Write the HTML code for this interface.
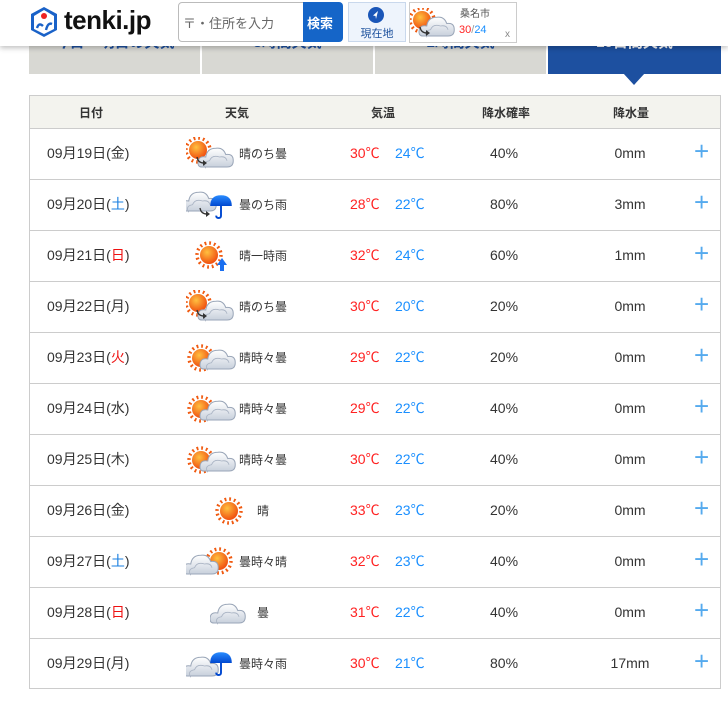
<!DOCTYPE html>
<html><head><meta charset="utf-8"><style>
*{margin:0;padding:0;box-sizing:border-box}
body{width:728px;height:703px;background:#fff;font-family:"Liberation Sans","Noto Sans CJK JP",sans-serif;color:#333;position:relative;overflow:hidden}
.abs{position:absolute}
.tab{position:absolute;top:40px;height:34px;background:#d8d8d3;overflow:hidden;color:#1d50a0;font-size:15px;font-weight:bold;text-align:center}
.tab i{font-style:normal;position:relative;top:-9px}
.hdr{position:absolute;left:0;top:0;width:728px;height:46px;background:#fff;box-shadow:0 2px 5px rgba(0,0,0,.25)}
.tbl{position:absolute;left:29px;top:95px;width:692px;height:594px;border:1px solid #ccc}
.hd{height:33px;background:#f3f3ee;border-bottom:1px solid #ccc;position:relative;font-size:12px;font-weight:bold;color:#333}
.hd span{position:absolute;top:8px;transform:translateX(-50%)}
.row{height:51px;border-bottom:1px solid #ccc;position:relative;font-size:14px}
.row:last-child{border-bottom:none}
.row span{position:absolute;top:14px}
.d{left:17px;color:#333}
.w{font-size:12px;top:16px!important;color:#333}
.hi{left:320px;color:#f22}
.lo{left:365px;color:#1a8fff}
.p{left:460px;color:#333;top:16px!important}
.mm{color:#333;transform:translateX(-50%);left:600px;top:16px!important}
.pl{left:664px;color:#55aaee;font-size:26px;top:7px!important;font-weight:normal}
.r{color:#e11}.b{color:#1a7fe0}
svg.ic{position:absolute;top:8px}
</style></head><body>
<svg width="0" height="0" style="position:absolute"><defs>
<radialGradient id="sg" cx="40%" cy="35%" r="65%"><stop offset="0" stop-color="#ffc040"/><stop offset="1" stop-color="#f05010"/></radialGradient>
<linearGradient id="cg" x1="0" y1="0" x2="0" y2="1"><stop offset="0" stop-color="#fff"/><stop offset="1" stop-color="#c8d0dc"/></linearGradient>
<linearGradient id="ug" x1="0" y1="0" x2="0" y2="1"><stop offset="0" stop-color="#2a8cff"/><stop offset="1" stop-color="#0048d0"/></linearGradient>
<g id="sun"><circle cx="0" cy="0" r="12" fill="none" stroke="#f05a10" stroke-width="3.4" stroke-dasharray="1.8 2.9"/><circle cx="0" cy="0" r="9" fill="url(#sg)"/></g>
<g id="cl"><g transform="scale(1.25)"><path d="M-12 8 Q-16 8 -15 3 Q-14 -1 -9 0 Q-8 -7 -1 -7 Q5 -8 7 -2 Q13 -3 13 3 Q13 8 8 8 Z" fill="url(#cg)" stroke="#9aa6b8" stroke-width="0.8"/><path d="M-9 9 Q-12 4 -6 3 Q-4 -2 2 0 Q7 -1 8 3" fill="none" stroke="#aab4c4" stroke-width="0.7"/></g></g>
<g id="um"><g transform="scale(1.2)"><path d="M-9 0 Q-9 -9 0 -9 Q9 -9 9 0 Z" fill="url(#ug)"/><path d="M0 0 V8 Q0 10 -2 10 Q-4 10 -4 8" fill="none" stroke="#0048d0" stroke-width="1.6"/></g></g>
<g id="ar"><path d="M-4 -3 Q-3 3 3 3" fill="none" stroke="#333" stroke-width="1.3"/><path d="M2 0 L6 3 L2 6 Z" fill="#333"/></g>
<g id="sm"><path d="M0 -6 L5 1 H2 V7 H-2 V1 H-5 Z" fill="#1a6ff0"/></g>
</defs></svg>

<div class="tab" style="left:29px;width:171px"><i>今日・明日の天気</i></div>
<div class="tab" style="left:202px;width:171px"><i>3時間天気</i></div>
<div class="tab" style="left:375px;width:171px"><i>1時間天気</i></div>
<div class="tab" style="left:548px;width:173px;background:#1d50a0;color:#fff"><i>10日間天気</i></div>
<div class="abs" style="left:623px;top:73px;width:0;height:0;border-left:11px solid transparent;border-right:11px solid transparent;border-top:12px solid #1d50a0"></div>

<div class="hdr"></div>
<svg class="abs" style="left:29px;top:6px" width="30" height="32" viewBox="0 0 30 32"><path d="M15 1 L28 8 V24 L15 31 L2 24 V8 Z" fill="#1a62c8"/><path d="M15 4 L25 10 V23 L15 28 L5 23 V10 Z" fill="#fff"/><circle cx="15" cy="10" r="3" fill="#e22"/><path d="M8 22 Q10 16 14 20 M17 24 Q19 16 23 18" stroke="#1a62c8" stroke-width="2.4" fill="none"/></svg>
<div class="abs" style="left:64px;top:5px;font-size:26px;font-weight:bold;color:#111;letter-spacing:-0.5px">tenki.jp</div>
<div class="abs" style="left:178px;top:2px;width:126px;height:40px;border:1px solid #bbb;border-radius:4px 0 0 4px;font-size:13px;color:#666;padding:10px 0 0 4px;background:#fff">〒・住所を入力</div>
<div class="abs" style="left:303px;top:2px;width:40px;height:40px;background:#1565c8;color:#fff;font-size:13px;font-weight:bold;border-radius:0 4px 4px 0;padding:11px 0 0 4px">検索</div>
<div class="abs" style="left:348px;top:2px;width:58px;height:40px;background:#eef4fc;border:1px solid #c9d8ec;font-size:11px;color:#1a4f9c;text-align:center;padding-top:22px">現在地</div>
<svg class="abs" style="left:367px;top:6px" width="18" height="18"><circle cx="9" cy="9" r="8" fill="#1a56b8"/><path d="M11 5 L6 9.5 L8.5 10 L9 13 Z" fill="#fff"/></svg>
<div class="abs" style="left:409px;top:2px;width:108px;height:41px;border:1px solid #ccc;background:#fff"></div>
<svg class="abs" style="left:410px;top:8px" width="48" height="30" viewBox="-6 -14 48 30"><use href="#sun" x="6" y="-2"/><use href="#cl" x="22" y="4"/><use href="#ar" x="8" y="8"/></svg>
<div class="abs" style="left:460px;top:5px;font-size:10px;color:#555">桑名市</div>
<div class="abs" style="left:459px;top:24px;font-size:11px"><span style="color:#f22">30</span><span style="color:#999">/</span><span style="color:#1a8fff">24</span></div>
<div class="abs" style="left:505px;top:29px;font-size:10px;color:#888">x</div>

<div class="tbl">
<div class="hd"><span style="left:61px">日付</span><span style="left:207px">天気</span><span style="left:353px">気温</span><span style="left:476px">降水確率</span><span style="left:601px">降水量</span></div>

<div class="row"><span class="d">09月19日(金)</span>
<svg class="ic" style="left:156px" width="50" height="34" viewBox="-6 -16 50 34"><use href="#sun" x="6" y="-3"/><use href="#cl" x="25" y="4"/><use href="#ar" x="9" y="7"/></svg>
<span class="w" style="left:209px">晴のち曇</span><span class="hi">30℃</span><span class="lo">24℃</span><span class="p">40%</span><span class="mm">0mm</span><span class="pl">+</span></div>

<div class="row"><span class="d">09月20日(<b class="b" style="font-weight:normal">土</b>)</span>
<svg class="ic" style="left:156px" width="50" height="34" viewBox="-6 -16 50 34"><use href="#cl" x="8" y="-3"/><use href="#um" x="29" y="2"/><use href="#ar" x="12" y="7"/></svg>
<span class="w" style="left:209px">曇のち雨</span><span class="hi">28℃</span><span class="lo">22℃</span><span class="p">80%</span><span class="mm">3mm</span><span class="pl">+</span></div>

<div class="row"><span class="d">09月21日(<b class="r" style="font-weight:normal">日</b>)</span>
<svg class="ic" style="left:160px" width="44" height="34" viewBox="-6 -16 44 34"><use href="#sun" x="13" y="0"/><use href="#sm" x="26" y="9"/></svg>
<span class="w" style="left:209px">晴一時雨</span><span class="hi">32℃</span><span class="lo">24℃</span><span class="p">60%</span><span class="mm">1mm</span><span class="pl">+</span></div>

<div class="row"><span class="d">09月22日(月)</span>
<svg class="ic" style="left:156px" width="50" height="34" viewBox="-6 -16 50 34"><use href="#sun" x="6" y="-3"/><use href="#cl" x="25" y="4"/><use href="#ar" x="9" y="7"/></svg>
<span class="w" style="left:209px">晴のち曇</span><span class="hi">30℃</span><span class="lo">20℃</span><span class="p">20%</span><span class="mm">0mm</span><span class="pl">+</span></div>

<div class="row"><span class="d">09月23日(<b class="r" style="font-weight:normal">火</b>)</span>
<svg class="ic" style="left:156px" width="50" height="34" viewBox="-6 -16 50 34"><use href="#sun" x="9" y="1"/><use href="#cl" x="27" y="2"/></svg>
<span class="w" style="left:209px">晴時々曇</span><span class="hi">29℃</span><span class="lo">22℃</span><span class="p">20%</span><span class="mm">0mm</span><span class="pl">+</span></div>

<div class="row"><span class="d">09月24日(水)</span>
<svg class="ic" style="left:156px" width="50" height="34" viewBox="-6 -16 50 34"><use href="#sun" x="9" y="1"/><use href="#cl" x="27" y="2"/></svg>
<span class="w" style="left:209px">晴時々曇</span><span class="hi">29℃</span><span class="lo">22℃</span><span class="p">40%</span><span class="mm">0mm</span><span class="pl">+</span></div>

<div class="row"><span class="d">09月25日(木)</span>
<svg class="ic" style="left:156px" width="50" height="34" viewBox="-6 -16 50 34"><use href="#sun" x="9" y="1"/><use href="#cl" x="27" y="2"/></svg>
<span class="w" style="left:209px">晴時々曇</span><span class="hi">30℃</span><span class="lo">22℃</span><span class="p">40%</span><span class="mm">0mm</span><span class="pl">+</span></div>

<div class="row"><span class="d">09月26日(金)</span>
<svg class="ic" style="left:182px" width="34" height="34" viewBox="-17 -17 34 34"><use href="#sun"/></svg>
<span class="w" style="left:227px">晴</span><span class="hi">33℃</span><span class="lo">23℃</span><span class="p">20%</span><span class="mm">0mm</span><span class="pl">+</span></div>

<div class="row"><span class="d">09月27日(<b class="b" style="font-weight:normal">土</b>)</span>
<svg class="ic" style="left:156px" width="50" height="34" viewBox="-6 -16 50 34"><use href="#sun" x="27" y="0"/><use href="#cl" x="10" y="3"/></svg>
<span class="w" style="left:209px">曇時々晴</span><span class="hi">32℃</span><span class="lo">23℃</span><span class="p">40%</span><span class="mm">0mm</span><span class="pl">+</span></div>

<div class="row"><span class="d">09月28日(<b class="r" style="font-weight:normal">日</b>)</span>
<svg class="ic" style="left:180px" width="38" height="34" viewBox="-19 -16 38 34"><use href="#cl" x="0" y="1"/></svg>
<span class="w" style="left:227px">曇</span><span class="hi">31℃</span><span class="lo">22℃</span><span class="p">40%</span><span class="mm">0mm</span><span class="pl">+</span></div>

<div class="row"><span class="d">09月29日(月)</span>
<svg class="ic" style="left:156px" width="50" height="34" viewBox="-6 -16 50 34"><use href="#cl" x="10" y="3"/><use href="#um" x="29" y="0"/></svg>
<span class="w" style="left:209px">曇時々雨</span><span class="hi">30℃</span><span class="lo">21℃</span><span class="p">80%</span><span class="mm">17mm</span><span class="pl">+</span></div>
</div>
</body></html>
